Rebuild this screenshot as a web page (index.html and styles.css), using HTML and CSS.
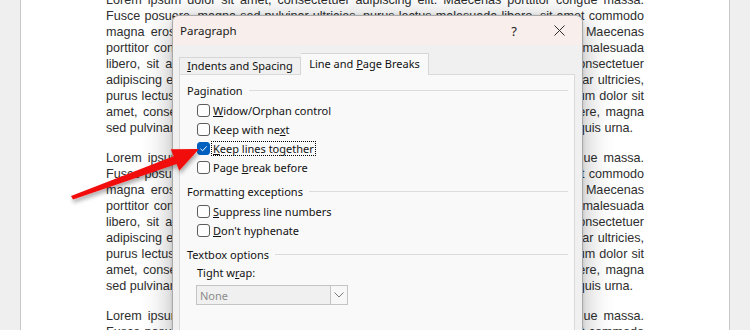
FILE: index.html
```html
<!DOCTYPE html>
<html>
<head>
<meta charset="utf-8">
<link rel="stylesheet" href="styles.css">
</head>
<body>
<div class="page">
  <div class="doc">
    <p class="para">
      <span class="ln">Lorem ipsum dolor sit amet, consectetuer adipiscing elit. Maecenas porttitor congue massa.</span>
      <span class="ln">Fusce posuere, magna sed pulvinar ultricies, purus lectus malesuada libero, sit amet commodo</span>
      <span class="ln">magna eros quis urna. Lorem ipsum dolor sit amet, consectetuer adipiscing elit. Maecenas</span>
      <span class="ln">porttitor congue massa. Fusce posuere, magna sed pulvinar ultricies, purus lectus malesuada</span>
      <span class="ln">libero, sit amet commodo magna eros quis urna. Lorem ipsum dolor sit amet, consectetuer</span>
      <span class="ln">adipiscing elit. Maecenas porttitor congue massa. Fusce posuere, magna sed pulvinar ultricies,</span>
      <span class="ln">purus lectus malesuada libero, sit amet commodo magna eros quis urna. Lorem ipsum dolor sit</span>
      <span class="ln">amet, consectetuer adipiscing elit. Maecenas porttitor congue massa. Fusce posuere, magna</span>
      <span class="ln last">sed pulvinar ultricies, purus lectus malesuada libero, sit amet commodo magna eros quis urna.</span>
    </p>
    <p class="para">
      <span class="ln">Lorem ipsum dolor sit amet, consectetuer adipiscing elit. Maecenas porttitor congue massa.</span>
      <span class="ln">Fusce posuere, magna sed pulvinar ultricies, purus lectus malesuada libero, sit amet commodo</span>
      <span class="ln">magna eros quis urna. Lorem ipsum dolor sit amet, consectetuer adipiscing elit. Maecenas</span>
      <span class="ln">porttitor congue massa. Fusce posuere, magna sed pulvinar ultricies, purus lectus malesuada</span>
      <span class="ln">libero, sit amet commodo magna eros quis urna. Lorem ipsum dolor sit amet, consectetuer</span>
      <span class="ln">adipiscing elit. Maecenas porttitor congue massa. Fusce posuere, magna sed pulvinar ultricies,</span>
      <span class="ln">purus lectus malesuada libero, sit amet commodo magna eros quis urna. Lorem ipsum dolor sit</span>
      <span class="ln">amet, consectetuer adipiscing elit. Maecenas porttitor congue massa. Fusce posuere, magna</span>
      <span class="ln last">sed pulvinar ultricies, purus lectus malesuada libero, sit amet commodo magna eros quis urna.</span>
    </p>
    <p class="para">
      <span class="ln">Lorem ipsum dolor sit amet, consectetuer adipiscing elit. Maecenas porttitor congue massa.</span>
      <span class="ln">Fusce posuere, magna sed pulvinar ultricies, purus lectus malesuada libero, sit amet commodo</span>
    </p>
  </div>
</div>

<div class="dialog">
  <div class="titlebar">
    <span class="title">Paragraph</span>
    <span class="tb-btn help">?</span>
    <span class="tb-btn close">
      <svg width="11" height="11" viewBox="0 0 11 11"><path d="M0.5 0.5 L10.5 10.5 M10.5 0.5 L0.5 10.5" stroke="#2b2b2b" stroke-width="1" fill="none"/></svg>
    </span>
  </div>
  <div class="dbody">
    <div class="tabs">
      <div class="tab"><u>I</u>ndents and Spacing</div>
      <div class="tab active">Line and <u>P</u>age Breaks</div>
    </div>
    <div class="panel">
      <div class="group-h"><span>Pagination</span><span class="rule"></span></div>
      <div class="rows">
        <div class="row"><span class="cb"></span><span class="lbl"><u>W</u>idow/Orphan control</span></div>
        <div class="row"><span class="cb"></span><span class="lbl">Keep with ne<u>x</u>t</span></div>
        <div class="row"><span class="cb checked"><svg width="13" height="13" viewBox="0 0 13 13"><path d="M3.5 6.8 L5.6 8.8 L9.6 4.4" stroke="#fff" stroke-width="1" fill="none"/></svg></span><span class="lbl focus"><u>K</u>eep lines together</span></div>
        <div class="row"><span class="cb"></span><span class="lbl">Page <u>b</u>reak before</span></div>
      </div>
      <div class="group-h next"><span>Formatting exceptions</span><span class="rule"></span></div>
      <div class="rows">
        <div class="row"><span class="cb"></span><span class="lbl"><u>S</u>uppress line numbers</span></div>
        <div class="row"><span class="cb"></span><span class="lbl"><u>D</u>on't hyphenate</span></div>
      </div>
      <div class="group-h next"><span>Textbox options</span><span class="rule"></span></div>
      <div class="tbox">
        <div class="tw-label">Tight w<u>r</u>ap:</div>
        <div class="select">
          <span class="sel-val">None</span>
          <span class="sel-btn"><svg width="10" height="6" viewBox="0 0 10 6"><path d="M0.5 0.5 L5 5 L9.5 0.5" stroke="#7a7a7a" stroke-width="1" fill="none"/></svg></span>
        </div>
      </div>
    </div>
  </div>
</div>

<svg class="arrow" width="750" height="330" viewBox="0 0 750 330">
  <defs>
    <filter id="sh" x="-20%" y="-20%" width="140%" height="160%">
      <feDropShadow dx="1" dy="3" stdDeviation="2.2" flood-color="#000" flood-opacity="0.35"/>
    </filter>
  </defs>
  <polygon points="71,196 173.6,156.3 170.8,149.3 199,149 179.2,170.8 176.6,163.9 73,199.5" fill="#f21010" filter="url(#sh)"/>
</svg>
</body>
</html>
```

FILE: styles.css
```css
html, body {
  margin: 0;
  padding: 0;
  overflow: hidden;
}
body {
  background: #efefef;
  width: 750px;
  height: 330px;
  position: relative;
}
.page {
  margin-left: 20px;
  width: 708px;
  height: 400px;
  background: #ffffff;
  border-left: 1px solid #c8c8c8;
  border-right: 1px solid #c8c8c8;
}
.doc {
  margin-top: -8px;
  padding-left: 85px;
  width: 538px;
  font-family: "Liberation Sans", Arial, sans-serif;
  font-size: 12.6px;
  line-height: 16px;
  color: #2e2e2e;
}
.para {
  margin: 0 0 14px 0;
}
.ln {
  display: block;
  text-align: justify;
  text-align-last: justify;
}
.ln.last {
  text-align: left;
  text-align-last: left;
}

.dialog {
  position: absolute;
  left: 172px;
  top: 15px;
  width: 411px;
  height: 340px;
  box-sizing: border-box;
  border: 1px solid #a9a9a9;
  border-radius: 7px 7px 0 0;
  background: #f0f0f0;
  box-shadow: 0 6px 30px rgba(0,0,0,0.30), 0 0 3px rgba(0,0,0,0.15);
  font-family: "Segoe UI", "Noto Sans", "Open Sans", sans-serif;
  font-size: 11px;
  color: #111;
  overflow: hidden;
}
.titlebar {
  height: 29px;
  background: #f8eeeb;
  display: flex;
  align-items: center;
  border-radius: 6px 6px 0 0;
}
.title {
  padding-left: 7px;
  flex: 1;
  font-size: 11.5px;
  color: #1a1a1a;
}
.tb-btn {
  display: flex;
  align-items: center;
  justify-content: center;
  height: 29px;
}
.help {
  width: 46px;
  font-size: 13px;
  color: #222;
}
.close {
  width: 45px;
}
.dbody {
  padding: 7px 7px 0 6px;
}
.tabs {
  display: flex;
  align-items: flex-end;
  height: 22px;
  position: relative;
  z-index: 1;
}
.tab {
  box-sizing: border-box;
  height: 17px;
  width: 122px;
  border: 1px solid #d6d6d6;
  border-bottom: none;
  background: #f0f0f0;
  text-align: center;
  white-space: nowrap;
  line-height: 15px;
  color: #111;
}
.tab.active {
  width: 128px;
  height: 22px;
  line-height: 20px;
  background: #f9f9f9;
  margin-bottom: -1px;
  border-left: none;
}
.panel {
  box-sizing: border-box;
  width: 396px;
  height: 300px;
  background: #f9f9f9;
  border: 1px solid #d9d9d9;
  padding: 7px 6px 0 7px;
}
.group-h {
  display: flex;
  align-items: center;
  height: 16px;
  gap: 6px;
  color: #111;
}
.group-h.next {
  margin-top: 6px;
}
.rule {
  flex: 1;
  height: 1px;
  margin-top: 1px;
  background: #dcdcdc;
}
.rows {
  padding-top: 3px;
  padding-left: 10px;
}
.row {
  display: flex;
  align-items: center;
  height: 19px;
}
.cb {
  box-sizing: border-box;
  width: 13px;
  height: 13px;
  border: 1px solid #5c5c5c;
  border-radius: 3px;
  background: #fdfdfd;
  margin-right: 1px;
  display: flex;
  align-items: center;
  justify-content: center;
}
.cb.checked {
  background: #0060c0;
  border-color: #0060c0;
}
.cb svg {
  display: block;
  margin: -1px;
}
.lbl {
  padding: 0 1px;
  border: 1px dotted transparent;
  line-height: 13px;
  white-space: nowrap;
}
.lbl.focus {
  border-color: #000;
}
.tbox {
  padding-left: 10px;
  padding-top: 3px;
}
.tw-label {
  height: 16px;
  line-height: 16px;
}
.select {
  box-sizing: border-box;
  margin-top: 4px;
  margin-left: -1px;
  width: 152px;
  height: 20px;
  border: 1px solid #c4c4c4;
  background: #f0f0f0;
  display: flex;
  align-items: center;
}
.sel-val {
  flex: 1;
  padding-left: 3px;
  color: #8c8c8c;
}
.sel-btn {
  width: 16px;
  height: 18px;
  border-left: 1px solid #c4c4c4;
  display: flex;
  align-items: center;
  justify-content: center;
  background: #f7f7f7;
}
.arrow {
  position: absolute;
  left: 0;
  top: 0;
  pointer-events: none;
}
```
